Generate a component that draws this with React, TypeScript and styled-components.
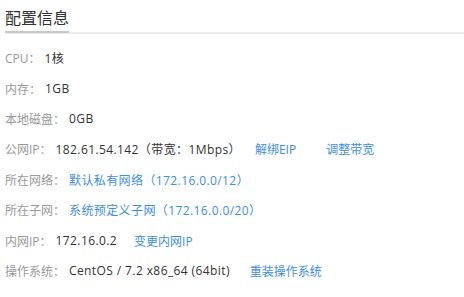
import React, { FC } from 'react';
import styled, { createGlobalStyle } from 'styled-components';

const GlobalStyle = createGlobalStyle`
  html, body {
    margin: 0;
    padding: 0;
    background: #fff;
  }
  body {
    font-family: "Open Sans", "Noto Sans CJK SC", "Liberation Sans", sans-serif;
  }
`;

const Panel = styled.div`
  width: 464px;
  height: 297px;
  padding: 6px 0 0 5px;
  box-sizing: border-box;
`;

const Header = styled.div`
  border-bottom: 2px solid #ebebeb;
  padding-bottom: 3px;
`;

const Title = styled.h3`
  display: inline-block;
  margin: 0 0 -5px;
  padding-bottom: 3px;
  border-bottom: 2px solid #c8c8c8;
  font-family: "Noto Sans CJK SC", sans-serif;
  font-size: 16px;
  font-weight: normal;
  line-height: 22px;
  color: #333;
`;

const List = styled.ul`
  list-style: none;
  margin: 0;
  padding: 9px 0 0;
`;

const Row = styled.li`
  display: flex;
  align-items: center;
  height: 30.4px;
  font-size: 12px;
  color: #333;
  white-space: nowrap;
`;

const Label = styled.span`
  color: #999;
  margin-right: 4px;
`;

const Value = styled.span<{ $link?: boolean }>`
  color: ${props => (props.$link ? '#3d8ee6' : '#333')};
  letter-spacing: 0.4px;
`;

const Action = styled.a<{ $gap?: number }>`
  margin-left: ${props => props.$gap ?? 17}px;
  color: #3d8ee6;
  text-decoration: none;
  cursor: pointer;
`;

interface Item {
  label: string;
  value: string;
  link?: boolean;
  actions?: { text: string; gap?: number }[];
}

const items: Item[] = [
  { label: 'CPU：', value: '1核' },
  { label: '内存：', value: '1GB' },
  { label: '本地磁盘：', value: '0GB' },
  {
    label: '公网IP：',
    value: '182.61.54.142（带宽：1Mbps）',
    actions: [{ text: '解绑EIP', gap: 14 }, { text: '调整带宽', gap: 30 }],
  },
  { label: '所在网络：', value: '默认私有网络（172.16.0.0/12）', link: true },
  { label: '所在子网：', value: '系统预定义子网（172.16.0.0/20）', link: true },
  { label: '内网IP：', value: '172.16.0.2', actions: [{ text: '变更内网IP' }] },
  { label: '操作系统：', value: 'CentOS / 7.2 x86_64 (64bit)', actions: [{ text: '重装操作系统', gap: 20 }] },
];

const App: FC = () => (
  <>
    <GlobalStyle />
    <Panel>
      <Header>
        <Title>配置信息</Title>
      </Header>
      <List>
        {items.map(item => (
          <Row key={item.label}>
            <Label>{item.label}</Label>
            <Value $link={item.link}>{item.value}</Value>
            {item.actions?.map(a => (
              <Action key={a.text} $gap={a.gap}>
                {a.text}
              </Action>
            ))}
          </Row>
        ))}
      </List>
    </Panel>
  </>
);

export default App;
